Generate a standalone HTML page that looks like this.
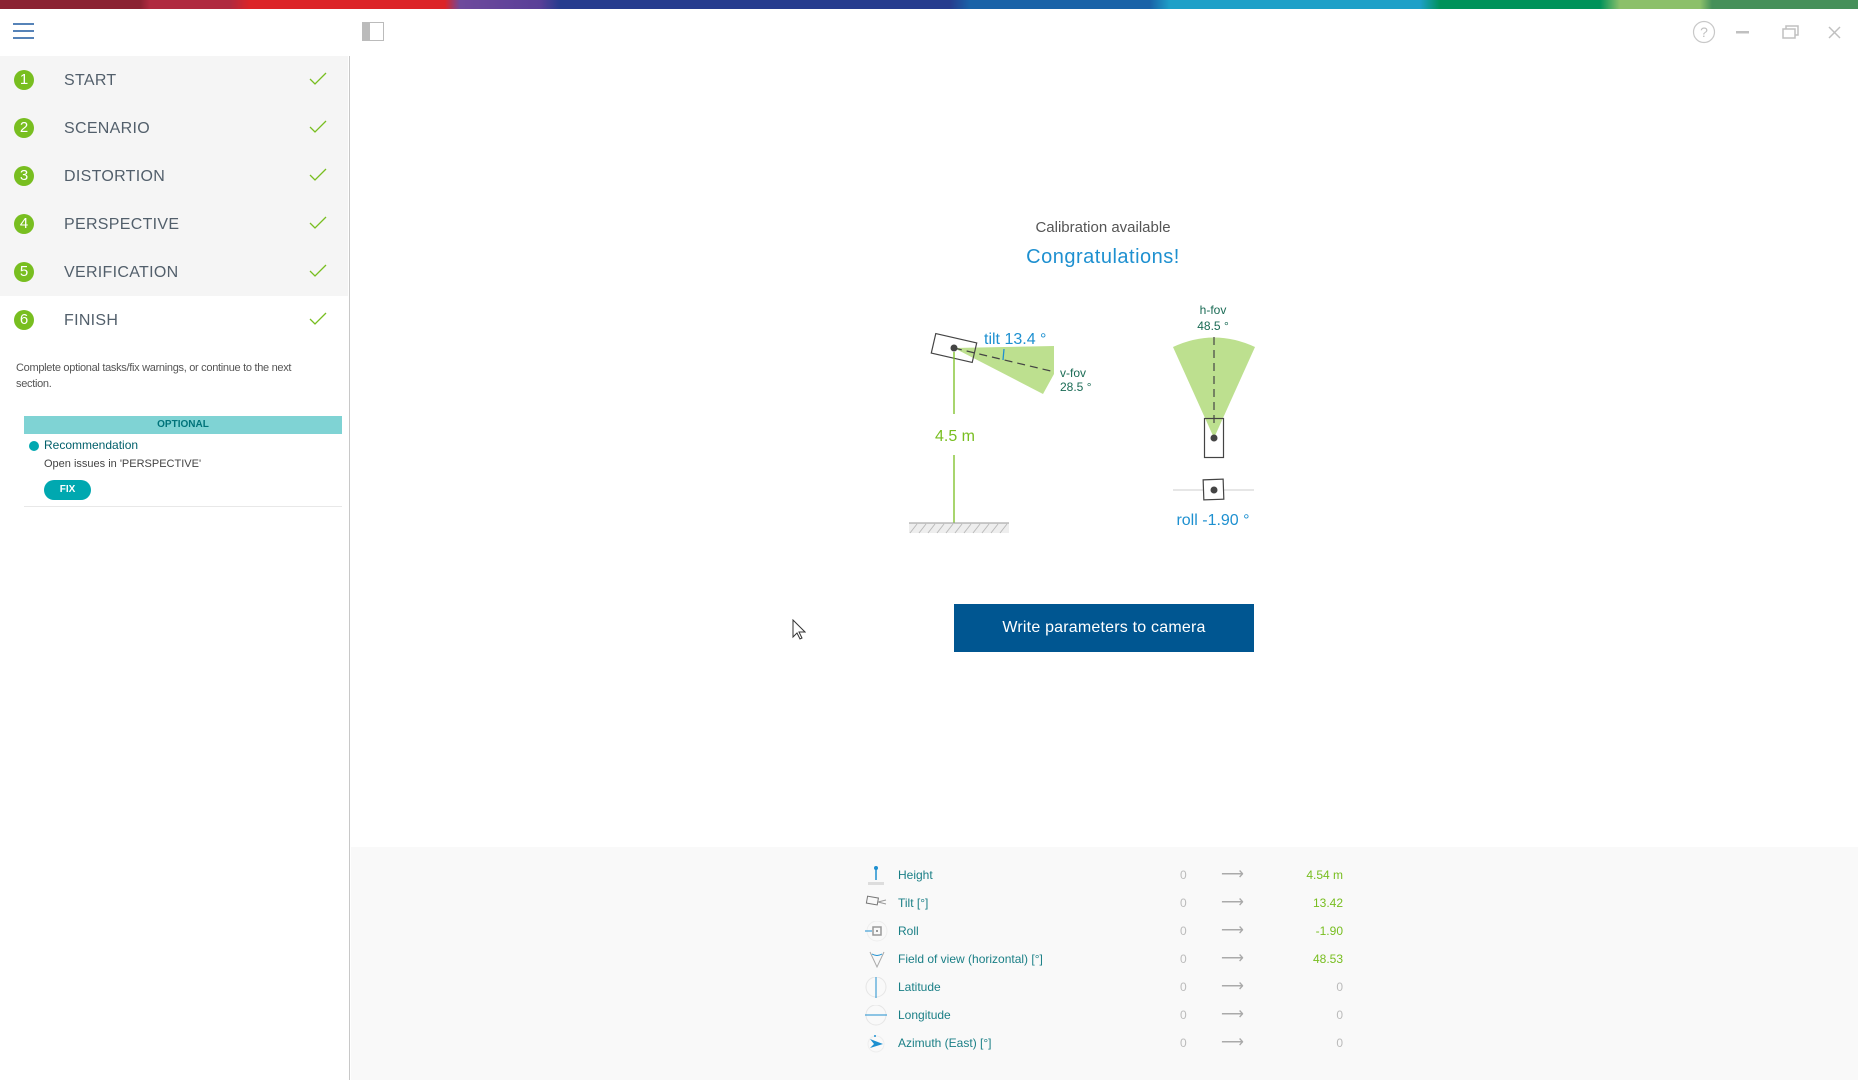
<!DOCTYPE html>
<html><head><meta charset="utf-8"><style>
*{margin:0;padding:0;box-sizing:border-box}
body{width:1858px;height:1080px;position:relative;background:#fff;font-family:"Liberation Sans",sans-serif;overflow:hidden}
.top{position:absolute;left:0;top:0;width:1858px;height:9px;background:linear-gradient(90deg,#8b2232 0,#8b2232 140px,#b02a40 150px,#b02a40 230px,#dc2428 250px,#dc2428 445px,#6e4a9c 460px,#5a3f98 540px,#263c8e 560px,#263c8e 950px,#1a63a8 970px,#1a63a8 1150px,#1ea0c8 1170px,#1ea0c8 1420px,#00925a 1440px,#00925a 1600px,#8cc06a 1620px,#8cc06a 1700px,#46905a 1712px,#46905a 1858px)}
.side{position:absolute;left:0;top:56px;width:350px;height:1024px;border-right:1.5px solid #c8c8c8}
.row{position:absolute;left:0;width:348px;height:48px}
.num{position:absolute;left:14px;top:14px;width:20px;height:20px;border-radius:50%;background:#78be20;color:#fff;font-size:15px;text-align:center;line-height:20px}
.lbl{position:absolute;left:64px;top:16px;font-size:16px;color:#525f6b;letter-spacing:.3px}
.chk{position:absolute;left:309px;top:16px}
.t{position:absolute;white-space:nowrap}
.bottom{position:absolute;left:351px;top:847px;width:1507px;height:233px;background:#f9f9f9}
.r{position:absolute;left:0;width:1858px;height:20px;font-size:12px}
.r .lab{position:absolute;left:898px;color:#1a7f86}
.r .z{position:absolute;left:1180px;color:#bbb}
.r .ar{position:absolute;left:1221px;color:#aaa;font-size:16px;top:-4px}
.r .v{position:absolute;right:515px;color:#78be20}
.r .ic{position:absolute;left:864px;top:-3px}
</style></head><body>
<div class="top"></div>
<svg class="t" style="left:13px;top:23px" width="22" height="16"><g stroke="#1f5aa0" stroke-width="1.6"><line x1="0" y1="1" x2="21" y2="1"/><line x1="0" y1="8" x2="21" y2="8"/><line x1="0" y1="15" x2="21" y2="15"/></g></svg>
<svg class="t" style="left:362px;top:22px" width="22" height="20"><rect x="0.5" y="0.5" width="21" height="18" fill="#fff" stroke="#bbb"/><rect x="1" y="1" width="7" height="17" fill="#bbb"/></svg>
<svg class="t" style="left:1692px;top:20px" width="160" height="24"><circle cx="12" cy="12" r="10.5" fill="none" stroke="#c8c8c8" stroke-width="1.2"/><text x="12" y="17" font-size="14" fill="#c0c0c0" text-anchor="middle" font-family="Liberation Sans">?</text><rect x="44" y="11" width="13" height="2.5" fill="#c0c0c0"/><g fill="none" stroke="#c0c0c0" stroke-width="1.5"><rect x="91" y="9" width="12" height="9"/><path d="M94 9V6h12v9h-3"/><path d="M137 7l11 11M148 7l-11 11"/></g></svg>
<div class="side">
 <div style="position:absolute;left:0;top:0;width:348px;height:240px;background:#f5f5f5"></div>
 <div class="row" style="top:0"><div class="num">1</div><div class="lbl">START</div><svg class="chk" width="18" height="14"><path d="M1 7l5 5L17 1" fill="none" stroke="#78be20" stroke-width="1.3"/></svg></div>
 <div class="row" style="top:48px"><div class="num">2</div><div class="lbl">SCENARIO</div><svg class="chk" width="18" height="14"><path d="M1 7l5 5L17 1" fill="none" stroke="#78be20" stroke-width="1.3"/></svg></div>
 <div class="row" style="top:96px"><div class="num">3</div><div class="lbl">DISTORTION</div><svg class="chk" width="18" height="14"><path d="M1 7l5 5L17 1" fill="none" stroke="#78be20" stroke-width="1.3"/></svg></div>
 <div class="row" style="top:144px"><div class="num">4</div><div class="lbl">PERSPECTIVE</div><svg class="chk" width="18" height="14"><path d="M1 7l5 5L17 1" fill="none" stroke="#78be20" stroke-width="1.3"/></svg></div>
 <div class="row" style="top:192px"><div class="num">5</div><div class="lbl">VERIFICATION</div><svg class="chk" width="18" height="14"><path d="M1 7l5 5L17 1" fill="none" stroke="#78be20" stroke-width="1.3"/></svg></div>
 <div class="row" style="top:240px"><div class="num">6</div><div class="lbl">FINISH</div><svg class="chk" width="18" height="14"><path d="M1 7l5 5L17 1" fill="none" stroke="#78be20" stroke-width="1.3"/></svg></div>
 <div class="t" style="left:16px;top:304px;font-size:11px;color:#555;line-height:16px;letter-spacing:-.3px">Complete optional tasks/fix warnings, or continue to the next<br>section.</div>
 <div class="t" style="left:24px;top:360px;width:318px;height:18px;background:#7fd3d4;color:#00737a;font-size:10px;font-weight:bold;text-align:center;line-height:18px">OPTIONAL</div>
 <div class="t" style="left:29px;top:385px;width:10px;height:10px;border-radius:50%;background:#00a8b0"></div>
 <div class="t" style="left:44px;top:382px;font-size:12px;color:#005f6a">Recommendation</div>
 <div class="t" style="left:44px;top:402px;font-size:11px;color:#444">Open issues in 'PERSPECTIVE'</div>
 <div class="t" style="left:44px;top:424px;width:47px;height:20px;border-radius:10px;background:#00a8b0;color:#fff;font-size:10px;font-weight:bold;text-align:center;line-height:20px">FIX</div>
 <div class="t" style="left:24px;top:450px;width:318px;height:1px;background:#e8e8e8"></div>
</div>
<div class="t" style="left:953px;top:219px;width:300px;text-align:center;font-size:15px;color:#555">Calibration available</div>
<div class="t" style="left:953px;top:246px;width:300px;text-align:center;font-size:20px;color:#1e90d0;letter-spacing:.5px">Congratulations!</div>
<svg class="t" style="left:0;top:0" width="1858" height="560">
 <polygon points="954,348 1054,346 1054,374 1043,394" fill="#bde08f"/>
 <rect x="933" y="338" width="42" height="20" fill="none" stroke="#444" stroke-width="1.2" transform="rotate(13 954 348)"/>
 <line x1="954" y1="348" x2="1055" y2="372" stroke="#444" stroke-dasharray="8,5" stroke-width="1.2"/>
 <line x1="1004" y1="349" x2="1003" y2="360" stroke="#1e90d0" stroke-width="1.3"/>
 <circle cx="954" cy="348" r="3.5" fill="#444"/>
 <line x1="954" y1="352" x2="954" y2="414" stroke="#78be20" stroke-width="1.3"/>
 <line x1="954" y1="455" x2="954" y2="523" stroke="#78be20" stroke-width="1.3"/>
 <rect x="909" y="523" width="100" height="10" fill="#eee"/>
 <line x1="909" y1="523" x2="1009" y2="523" stroke="#999"/>
 <g stroke="#bbb" stroke-width="1">
  <path d="M910 533l7-9M919 533l7-9M928 533l7-9M937 533l7-9M946 533l7-9M955 533l7-9M964 533l7-9M973 533l7-9M982 533l7-9M991 533l7-9M1000 533l7-9"/>
 </g>
 <text x="984" y="344" font-size="16" fill="#1e90d0" font-family="Liberation Sans">tilt 13.4 °</text>
 <text x="1060" y="377" font-size="12" fill="#1a6b55" font-family="Liberation Sans">v-fov</text>
 <text x="1060" y="391" font-size="12" fill="#1a6b55" font-family="Liberation Sans">28.5 °</text>
 <text x="955" y="441" font-size="16" fill="#78be20" text-anchor="middle" font-family="Liberation Sans">4.5 m</text>
 <path d="M1214,438 L1173,347 Q1214,328 1255,347 Z" fill="#bde08f"/>
 <line x1="1214" y1="337" x2="1214" y2="428" stroke="#444" stroke-dasharray="8,5" stroke-width="1.2"/>
 <rect x="1204.5" y="418.5" width="19" height="39" fill="none" stroke="#444" stroke-width="1.2"/>
 <circle cx="1214" cy="438" r="3.5" fill="#444"/>
 <text x="1213" y="314" font-size="12" fill="#1a6b55" text-anchor="middle" font-family="Liberation Sans">h-fov</text>
 <text x="1213" y="330" font-size="12" fill="#1a6b55" text-anchor="middle" font-family="Liberation Sans">48.5 °</text>
 <line x1="1173" y1="490" x2="1254" y2="490" stroke="#ccc"/>
 <rect x="1203.5" y="479.5" width="20" height="20" fill="#fff" stroke="#444" stroke-width="1.2" transform="rotate(-2 1214 490)"/>
 <circle cx="1214" cy="490" r="3.5" fill="#444"/>
 <text x="1213" y="525" font-size="16" fill="#1e90d0" text-anchor="middle" font-family="Liberation Sans">roll -1.90 °</text>
</svg>
<div class="t" style="left:954px;top:604px;width:300px;height:48px;background:#005691;color:#fff;font-size:16px;text-align:center;line-height:48px;letter-spacing:.2px">Write parameters to camera</div>
<svg class="t" style="left:792px;top:619px" width="14" height="22"><path d="M1 1v17l4-4 3 6 2-1-3-6h6z" fill="#fff" stroke="#333"/></svg>
<div class="bottom"></div>
<div class="r" style="top:868px"><svg class="ic" width="24" height="22"><line x1="12" y1="2" x2="12" y2="15" stroke="#1e90d0" stroke-width="1.5"/><circle cx="12" cy="3" r="2" fill="#1e90d0"/><rect x="4" y="17" width="16" height="3" fill="#ddd"/></svg><span class="lab">Height</span><span class="z">0</span><span class="ar">⟶</span><span class="v">4.54 m</span></div>
<div class="r" style="top:896px"><svg class="ic" width="24" height="22"><rect x="3" y="4" width="11" height="7" fill="none" stroke="#777" transform="rotate(10 8 7)"/><path d="M14 9l8 -2M14 9l8 2" stroke="#999"/></svg><span class="lab">Tilt [°]</span><span class="z">0</span><span class="ar">⟶</span><span class="v">13.42</span></div>
<div class="r" style="top:924px"><svg class="ic" width="24" height="22"><circle cx="13" cy="10" r="10" fill="none" stroke="#eee"/><line x1="1" y1="10" x2="8" y2="10" stroke="#1e90d0"/><rect x="9" y="6" width="8" height="8" fill="none" stroke="#999" stroke-width="1.5"/><rect x="12" y="9" width="2" height="2" fill="#999"/></svg><span class="lab">Roll</span><span class="z">0</span><span class="ar">⟶</span><span class="v">-1.90</span></div>
<div class="r" style="top:952px"><svg class="ic" width="24" height="22"><path d="M6 3l7 15 7-15" fill="none" stroke="#aaa"/><path d="M8 5q5 3 10 0" fill="none" stroke="#1e90d0"/></svg><span class="lab">Field of view (horizontal) [°]</span><span class="z">0</span><span class="ar">⟶</span><span class="v">48.53</span></div>
<div class="r" style="top:980px"><svg class="ic" width="24" height="22"><circle cx="12" cy="10" r="10" fill="none" stroke="#e6e6e6"/><line x1="12" y1="0" x2="12" y2="21" stroke="#1e90d0"/></svg><span class="lab">Latitude</span><span class="z">0</span><span class="ar">⟶</span><span class="v" style="color:#bbb">0</span></div>
<div class="r" style="top:1008px"><svg class="ic" width="24" height="22"><circle cx="12" cy="10" r="10" fill="none" stroke="#e6e6e6"/><line x1="1" y1="10" x2="23" y2="10" stroke="#1e90d0"/></svg><span class="lab">Longitude</span><span class="z">0</span><span class="ar">⟶</span><span class="v" style="color:#bbb">0</span></div>
<div class="r" style="top:1036px"><svg class="ic" width="24" height="22"><circle cx="12" cy="11" r="8" fill="none" stroke="#eee"/><circle cx="11" cy="3" r="1" fill="#1e90d0"/><path d="M6 6l13 5-13 4 4-4z" fill="#1e90d0"/></svg><span class="lab">Azimuth (East) [°]</span><span class="z">0</span><span class="ar">⟶</span><span class="v" style="color:#bbb">0</span></div>
</body></html>
